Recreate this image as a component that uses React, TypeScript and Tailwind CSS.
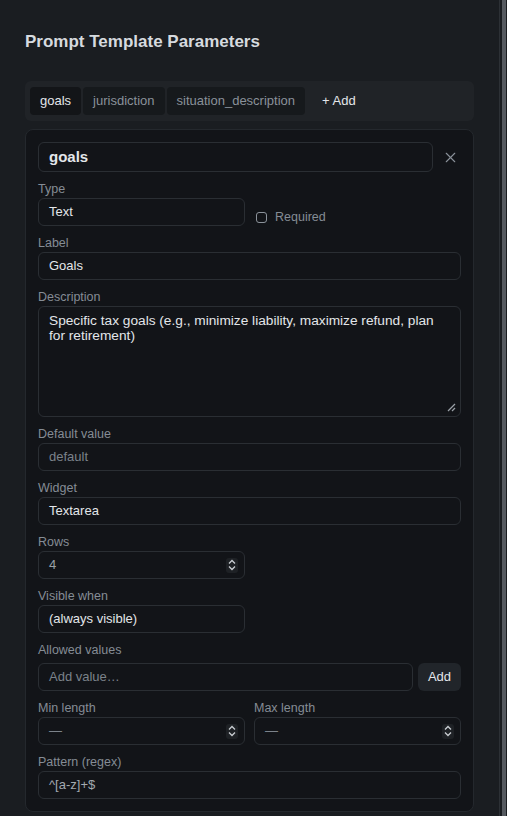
import { X } from 'lucide-react'

const font = { fontFamily: '"Liberation Sans", Arial, sans-serif' }

function Label({ children }: { children: React.ReactNode }) {
  return <div className="h-[17px] pt-[1px] text-[12.5px] leading-4 text-[#858c95]">{children}</div>
}

function Box({
  children,
  className = '',
  muted = false,
}: {
  children?: React.ReactNode
  className?: string
  muted?: boolean
}) {
  return (
    <div
      className={`flex h-7 items-center rounded-md border border-[#2a2e33] bg-[#121418] px-2.5 text-[13px] ${
        muted ? 'text-[#7b828a]' : 'text-[#e3e6ea]'
      } ${className}`}
    >
      {children}
    </div>
  )
}

function Spinner() {
  return (
    <div className="ml-auto -mr-1 flex h-[15px] w-[12px] items-center justify-center rounded-[3px] bg-[#1e2125]">
      <svg width="8" height="12" viewBox="0 0 8 12" fill="none" stroke="#c9cdd2" strokeWidth="1.3">
        <path d="M1 4.5 L4 1.5 L7 4.5" />
        <path d="M1 7.5 L4 10.5 L7 7.5" />
      </svg>
    </div>
  )
}

function Field({ label, children }: { label: string; children: React.ReactNode }) {
  return (
    <div className="flex flex-col gap-[1px]">
      <Label>{label}</Label>
      {children}
    </div>
  )
}

export default function App() {
  const tabs = ['goals', 'jurisdiction', 'situation_description']

  return (
    <div className="flex h-[816px] w-[507px] overflow-hidden bg-[#1a1d21]" style={font}>
      <div className="flex w-[500px] flex-col border-r border-[#2c3035] px-[25px]">
        <h2 className="mt-[28px] h-7 text-[17px] font-bold leading-7 text-[#d6dadf]">
          Prompt Template Parameters
        </h2>

        <div className="mt-[25px] flex w-[449px] items-center gap-[2px] rounded-md bg-[#202327] px-[5px] py-[6px]">
          {tabs.map((t, i) => (
            <div
              key={t}
              className={`flex h-7 items-center rounded-[4px] px-2.5 text-[13px] ${
                i === 0 ? 'bg-[#131518] text-[#e3e6ea]' : 'bg-[#16191c] text-[#8a919a]'
              }`}
            >
              {t}
            </div>
          ))}
          <div className="ml-[5px] flex h-7 items-center px-2.5 text-[13px] text-[#e3e6ea]">+ Add</div>
        </div>

        <div className="mt-2 flex w-[449px] flex-col gap-2 rounded-lg border border-[#24282d] bg-[#121418] p-3">
          <div className="flex items-center">
            <div className="flex h-[30px] w-[395px] items-center rounded-md border border-[#2a2e33] px-2.5 text-[15px] font-bold text-[#e3e6ea]">
              goals
            </div>
            <X className="ml-[9px] text-[#8b929a]" size={17} strokeWidth={1.5} />
          </div>

          <Field label="Type">
            <div className="flex h-7 items-end">
              <Box className="w-[207px]">Text</Box>
              <div className="ml-[11px] flex h-[18px] items-center gap-[8px]">
                <div className="h-[11px] w-[11px] rounded-[3px] border border-[#8b929a]" />
                <span className="text-[12.5px] leading-4 text-[#858c95]">Required</span>
              </div>
            </div>
          </Field>

          <Field label="Label">
            <Box>Goals</Box>
          </Field>

          <Field label="Description">
            <div className="relative h-[111px] rounded-md border border-[#2a2e33] px-2.5 pt-[6px] text-[13.7px] leading-[15px] text-[#e3e6ea]">
              Specific tax goals (e.g., minimize liability, maximize refund, plan for retirement)
              <svg
                className="absolute bottom-[4px] right-[4px]"
                width="9"
                height="9"
                viewBox="0 0 9 9"
                stroke="#9aa0a7"
                strokeWidth="1.2"
              >
                <path d="M1 8 L8 1" />
                <path d="M5 8 L8 5" />
              </svg>
            </div>
          </Field>

          <Field label="Default value">
            <Box muted>default</Box>
          </Field>

          <Field label="Widget">
            <Box>Textarea</Box>
          </Field>

          <Field label="Rows">
            <Box className="w-[207px] text-[#9aa0a7]!">
              4
              <Spinner />
            </Box>
          </Field>

          <Field label="Visible when">
            <Box className="w-[207px]">(always visible)</Box>
          </Field>

          <div className="flex flex-col gap-[1px]">
            <div className="mb-[4px]">
              <Label>Allowed values</Label>
            </div>
            <div className="flex gap-[5px]">
              <Box muted className="flex-1">
                Add value…
              </Box>
              <div className="flex h-7 w-[43px] items-center justify-center rounded-md bg-[#21252a] text-[13px] text-[#e3e6ea]">
                Add
              </div>
            </div>
          </div>

          <div className="grid grid-cols-2 gap-[9px]">
            <Field label="Min length">
              <Box muted>
                —
                <Spinner />
              </Box>
            </Field>
            <Field label="Max length">
              <Box muted>
                —
                <Spinner />
              </Box>
            </Field>
          </div>

          <Field label="Pattern (regex)">
            <Box className="text-[#a3a9b0]!">^[a-z]+$</Box>
          </Field>
        </div>
      </div>
      <div className="ml-[2px] w-[4px] bg-[#565a60]" />
    </div>
  )
}
